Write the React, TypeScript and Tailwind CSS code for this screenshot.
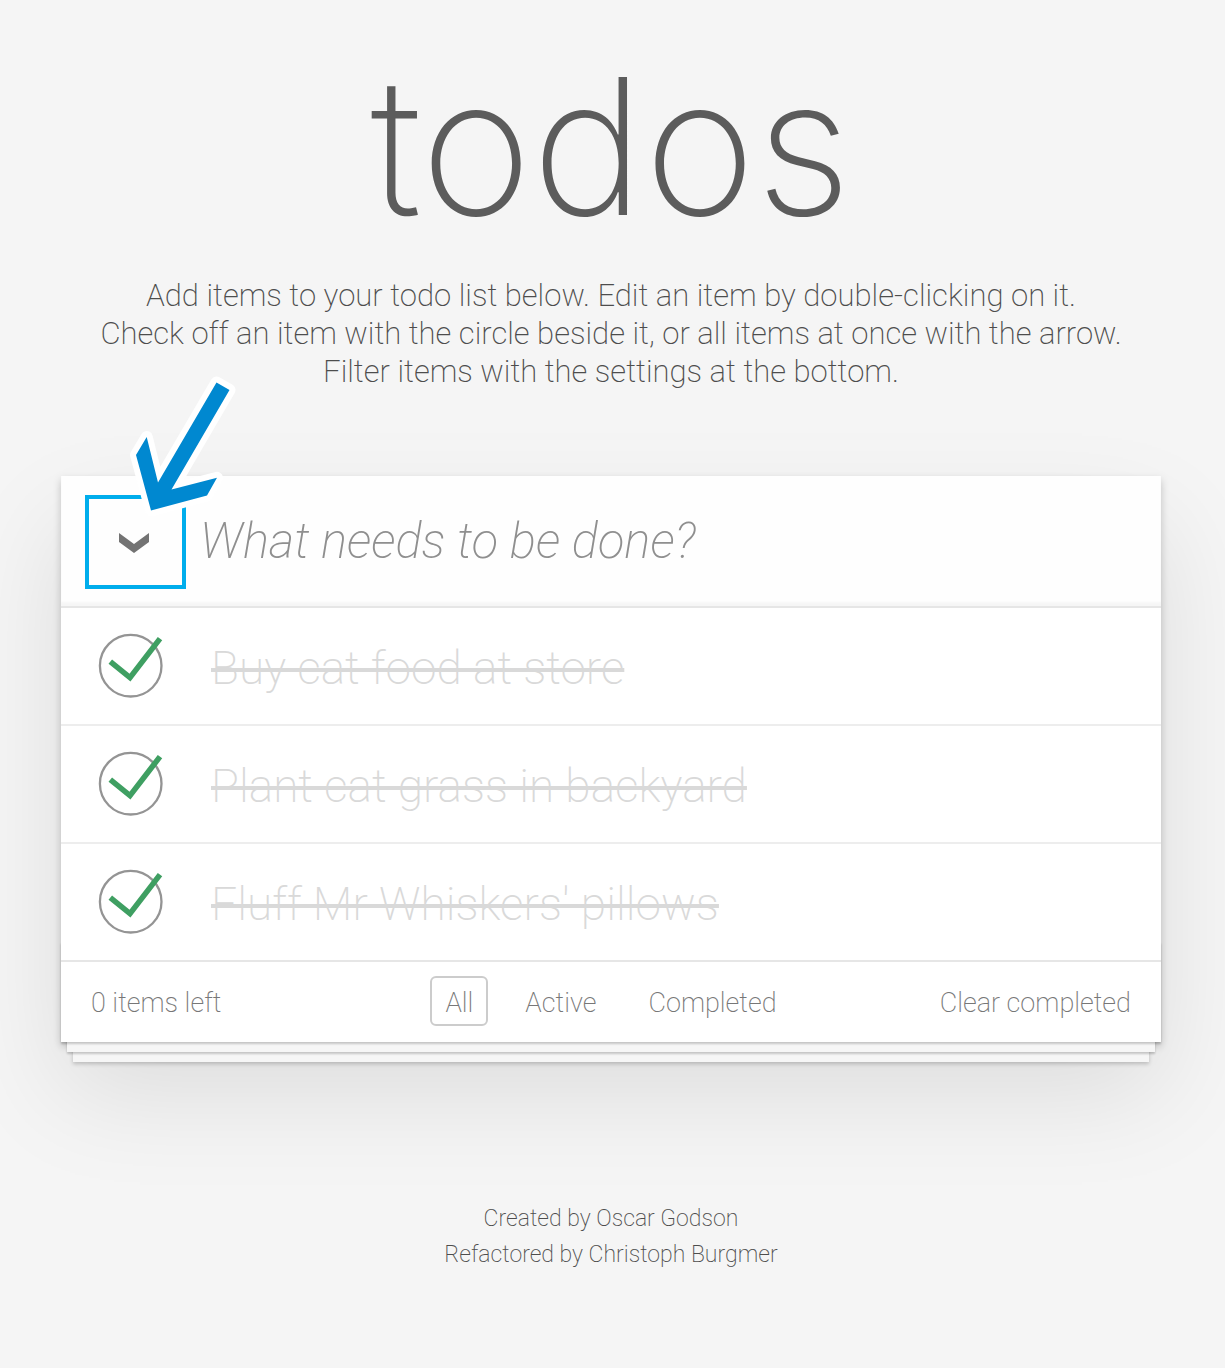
import { useState } from 'react';

const initialTodos = ['Buy cat food at store', 'Plant cat grass in backyard', "Fluff Mr Whiskers' pillows"];
const filters = ['All', 'Active', 'Completed'];

function Arrow() {
  return (
    <svg
      className="pointer-events-none absolute -top-[104px] left-[66px] z-20 h-[144px] w-[112px]"
      viewBox="0 0 112 144"
      fill="none"
      aria-hidden="true"
    >
      <path
        d="M89.5 10.5 L102.5 18 L44.5 117.5 L90 105.8 L80 123.5 L24 138.5 L9 83 L19.7 65 L31 110.5 Z"
        fill="#0088d0"
        stroke="#ffffff"
        strokeWidth="12"
        strokeLinejoin="round"
        paintOrder="stroke"
      />
    </svg>
  );
}

function Tick() {
  return (
    <svg className="pointer-events-none absolute inset-0 h-20 w-20" viewBox="0 0 80 80" fill="none" aria-hidden="true">
      <circle cx="39.7" cy="39.7" r="30.8" stroke="#949494" strokeWidth="2.3" />
      <path d="M19.3 35.6 L39 51.6 L69 12.6" stroke="#3f9f62" strokeWidth="5.6" />
    </svg>
  );
}

export default function App() {
  const [done, setDone] = useState([true, true, true]);
  const [filter, setFilter] = useState('All');
  const [draft, setDraft] = useState('');
  const left = done.filter((d) => !d).length;

  return (
    <div className="min-h-screen overflow-x-hidden bg-[#f5f5f5] pr-[64px] pb-20 pl-[61px] font-['Roboto','Liberation_Sans',sans-serif] font-extralight text-[#4d4d4d]">
      <header className="text-center">
        <h1 className="pt-[46px] font-['Inter','Liberation_Sans',sans-serif] text-[190px] leading-[200px] font-extralight text-[#5c5c5c]">
          todos
        </h1>
        <p className="mt-[31px] text-[31px] leading-[38px]">
          Add items to your todo list below. Edit an item by double-clicking on it.
          <br />
          Check off an item with the circle beside it, or all items at once with the arrow.
          <br />
          Filter items with the settings at the bottom.
        </p>
      </header>

      <main className="relative mt-[85px] bg-white shadow-[0_4px_8px_rgba(0,0,0,0.2),0_50px_100px_rgba(0,0,0,0.1)]">
        <div className="relative flex h-[130px] items-center bg-[#fefefe] pl-6 shadow-[inset_0_-4px_2px_rgba(0,0,0,0.03)]">
          <button
            type="button"
            aria-label="Mark all as complete"
            onClick={() => setDone(done.map(() => left > 0))}
            className="mt-0.5 flex h-[94px] w-[101px] shrink-0 items-center justify-center border-4 border-[#00adec] pt-0.5 pr-1"
          >
            <svg className="h-5 w-8" viewBox="0 0 32 20" fill="#737373" aria-hidden="true">
              <path d="M1 0 L16 11 L31 0 V9 L16 20 L1 9 Z" />
            </svg>
          </button>
          <Arrow />
          <input
            aria-label="New todo"
            value={draft}
            onChange={(e) => setDraft(e.target.value)}
            placeholder="What needs to be done?"
            className="ml-3.5 h-full min-w-0 flex-1 bg-transparent text-[49px] outline-none placeholder:text-[#8f8f8f] placeholder:italic"
          />
        </div>

        <ul className="border-t-2 border-[#e6e6e6]">
          {initialTodos.map((todo, i) => (
            <li key={todo} className="h-[118px] border-b-2 border-[#ededed] last:h-[116px] last:border-b-0">
              <label className="flex h-[116px] items-center pl-[30px]">
                <span className="relative block h-20 w-20 shrink-0">
                  <input
                    type="checkbox"
                    checked={done[i]}
                    onChange={() => setDone(done.map((d, k) => (k === i ? !d : d)))}
                    className="h-20 w-20 appearance-none rounded-full"
                  />
                  <Tick />
                </span>
                <span className="ml-10 pt-1 text-[46px] text-[#d9d9d9] line-through decoration-4">{todo}</span>
              </label>
            </li>
          ))}
        </ul>

        <footer className="relative grid h-[82px] grid-cols-[1fr_auto_1fr] items-center border-t-2 border-[#e6e6e6] px-[30px] pb-0.5 text-[27px] text-[#777777]">
          <div className="pointer-events-none absolute inset-x-0 bottom-0 h-[100px] shadow-[0_2px_2px_rgba(0,0,0,0.2),0_16px_0_-6px_#f6f6f6,0_18px_2px_-6px_rgba(0,0,0,0.2),0_32px_0_-12px_#f6f6f6,0_34px_4px_-12px_rgba(0,0,0,0.2)]" />
          <span className="pt-1">{left} items left</span>
          <nav className="flex gap-[22px]">
            {filters.map((name) => (
              <a
                key={name}
                href="#"
                onClick={(e) => {
                  e.preventDefault();
                  setFilter(name);
                }}
                className={
                  name === filter
                    ? 'rounded-md border-2 border-[#cccccc] px-[13px] pt-1 leading-[42px]'
                    : 'rounded-md border-2 border-transparent px-[13px] pt-1 leading-[42px]'
                }
              >
                {name}
              </a>
            ))}
          </nav>
          <button type="button" onClick={() => setDone(done.map(() => false))} className="justify-self-end pt-1">
            Clear completed
          </button>
        </footer>
      </main>

      <div className="mt-[159px] text-center text-[23px] leading-9">
        <p>Created by Oscar Godson</p>
        <p>Refactored by Christoph Burgmer</p>
      </div>
    </div>
  );
}
